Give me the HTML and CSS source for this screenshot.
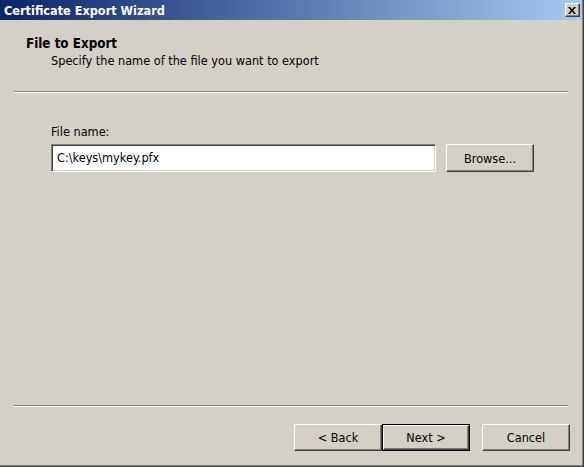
FILE: index.html
```html
<!DOCTYPE html>
<html>
<head>
<meta charset="utf-8">
<title>Certificate Export Wizard</title>
<link rel="stylesheet" href="styles.css">
</head>
<body>
<div class="window">
  <div class="titlebar">
    <span class="title">Certificate Export Wizard</span>
    <span class="close"><svg width="8" height="7" viewBox="0 0 8 7"><path d="M0 0h2l2 2.5L6 0h2L5 3.5 8 7H6L4 4.5 2 7H0l3-3.5z" fill="#000"/></svg></span>
  </div>
  <div class="header">
    <div class="heading">File to Export</div>
    <div class="subheading">Specify the name of the file you want to export</div>
  </div>
  <div class="sep"></div>
  <div class="content">
    <div class="label">File name:</div>
    <div class="row">
      <div class="field">C:\keys\mykey.pfx</div>
      <div class="btn browse">Browse...</div>
    </div>
  </div>
  <div class="sep"></div>
  <div class="footer">
    <div class="btn back">&lt; Back</div>
    <div class="default"><div class="btn next">Next &gt;</div></div>
    <div class="btn cancel">Cancel</div>
  </div>
</div>
</body>
</html>
```

FILE: styles.css
```css
html, body {
  margin: 0;
  padding: 0;
  background: #d4d0c8;
}
body {
  font-family: "DejaVu Sans Condensed", "DejaVu Sans", sans-serif;
  font-size: 12.6px;
  color: #000;
}
.window {
  width: 584px;
  height: 467px;
  box-sizing: border-box;
  background: #d4d0c8;
  border-right: 1px solid #404040;
  border-bottom: 1px solid #404040;
  box-shadow: inset -1px -1px 0 #808080;
  display: flex;
  flex-direction: column;
}
.titlebar {
  height: 20px;
  background: linear-gradient(to right, #0a246a, #a6caf0);
  display: flex;
  align-items: center;
  justify-content: space-between;
  padding: 0 2px 0 4px;
  margin-right: 1px;
}
.title {
  color: #fff;
  font-weight: bold;
  font-size: 12.6px;
}
.close {
  width: 15px;
  height: 14px;
  box-sizing: border-box;
  background: #d4d0c8;
  border-top: 1px solid #fff;
  border-left: 1px solid #fff;
  border-right: 1px solid #404040;
  border-bottom: 1px solid #404040;
  box-shadow: inset -1px -1px 0 #808080;
  display: flex;
  align-items: center;
  justify-content: center;
  padding-right: 1px;
}
.header {
  padding: 16px 0 0 26px;
  height: 71px;
  box-sizing: border-box;
}
.heading {
  font-weight: bold;
  font-size: 13.3px;
  line-height: 16px;
}
.subheading {
  padding-left: 25px;
  line-height: 16px;
  margin-top: 1px;
}
.sep {
  height: 1px;
  background: #808080;
  border-bottom: 1px solid #fff;
  margin: 0 15px 0 14px;
}
.content {
  flex: 1;
  padding: 31px 0 0 51px;
}
.label {
  line-height: 15px;
  margin-bottom: 5px;
}
.row {
  display: flex;
  gap: 10px;
}
.field {
  width: 385px;
  height: 28px;
  box-sizing: border-box;
  background: #fff;
  border-top: 1px solid #808080;
  border-left: 1px solid #808080;
  border-right: 1px solid #fff;
  border-bottom: 1px solid #fff;
  box-shadow: inset 1px 1px 0 #404040, inset -1px -1px 0 #d4d0c8;
  padding: 0 0 1px 5px;
  display: flex;
  align-items: center;
}
.btn {
  height: 28px;
  box-sizing: border-box;
  background: #d4d0c8;
  border-top: 1px solid #fff;
  border-left: 1px solid #fff;
  border-right: 1px solid #404040;
  border-bottom: 1px solid #404040;
  box-shadow: inset -1px -1px 0 #808080;
  display: flex;
  align-items: center;
  justify-content: center;
}
.browse {
  width: 88px;
}
.footer {
  display: flex;
  padding: 17px 0 13px 294px;
  height: 59px;
  box-sizing: border-box;
}
.back {
  width: 88px;
  height: 27px;
}
.default {
  border: 1px solid #000;
  width: 88px;
  height: 27px;
  box-sizing: border-box;
}
.next {
  width: 86px;
  height: 25px;
}
.cancel {
  width: 88px;
  height: 27px;
  margin-left: 12px;
}
```
